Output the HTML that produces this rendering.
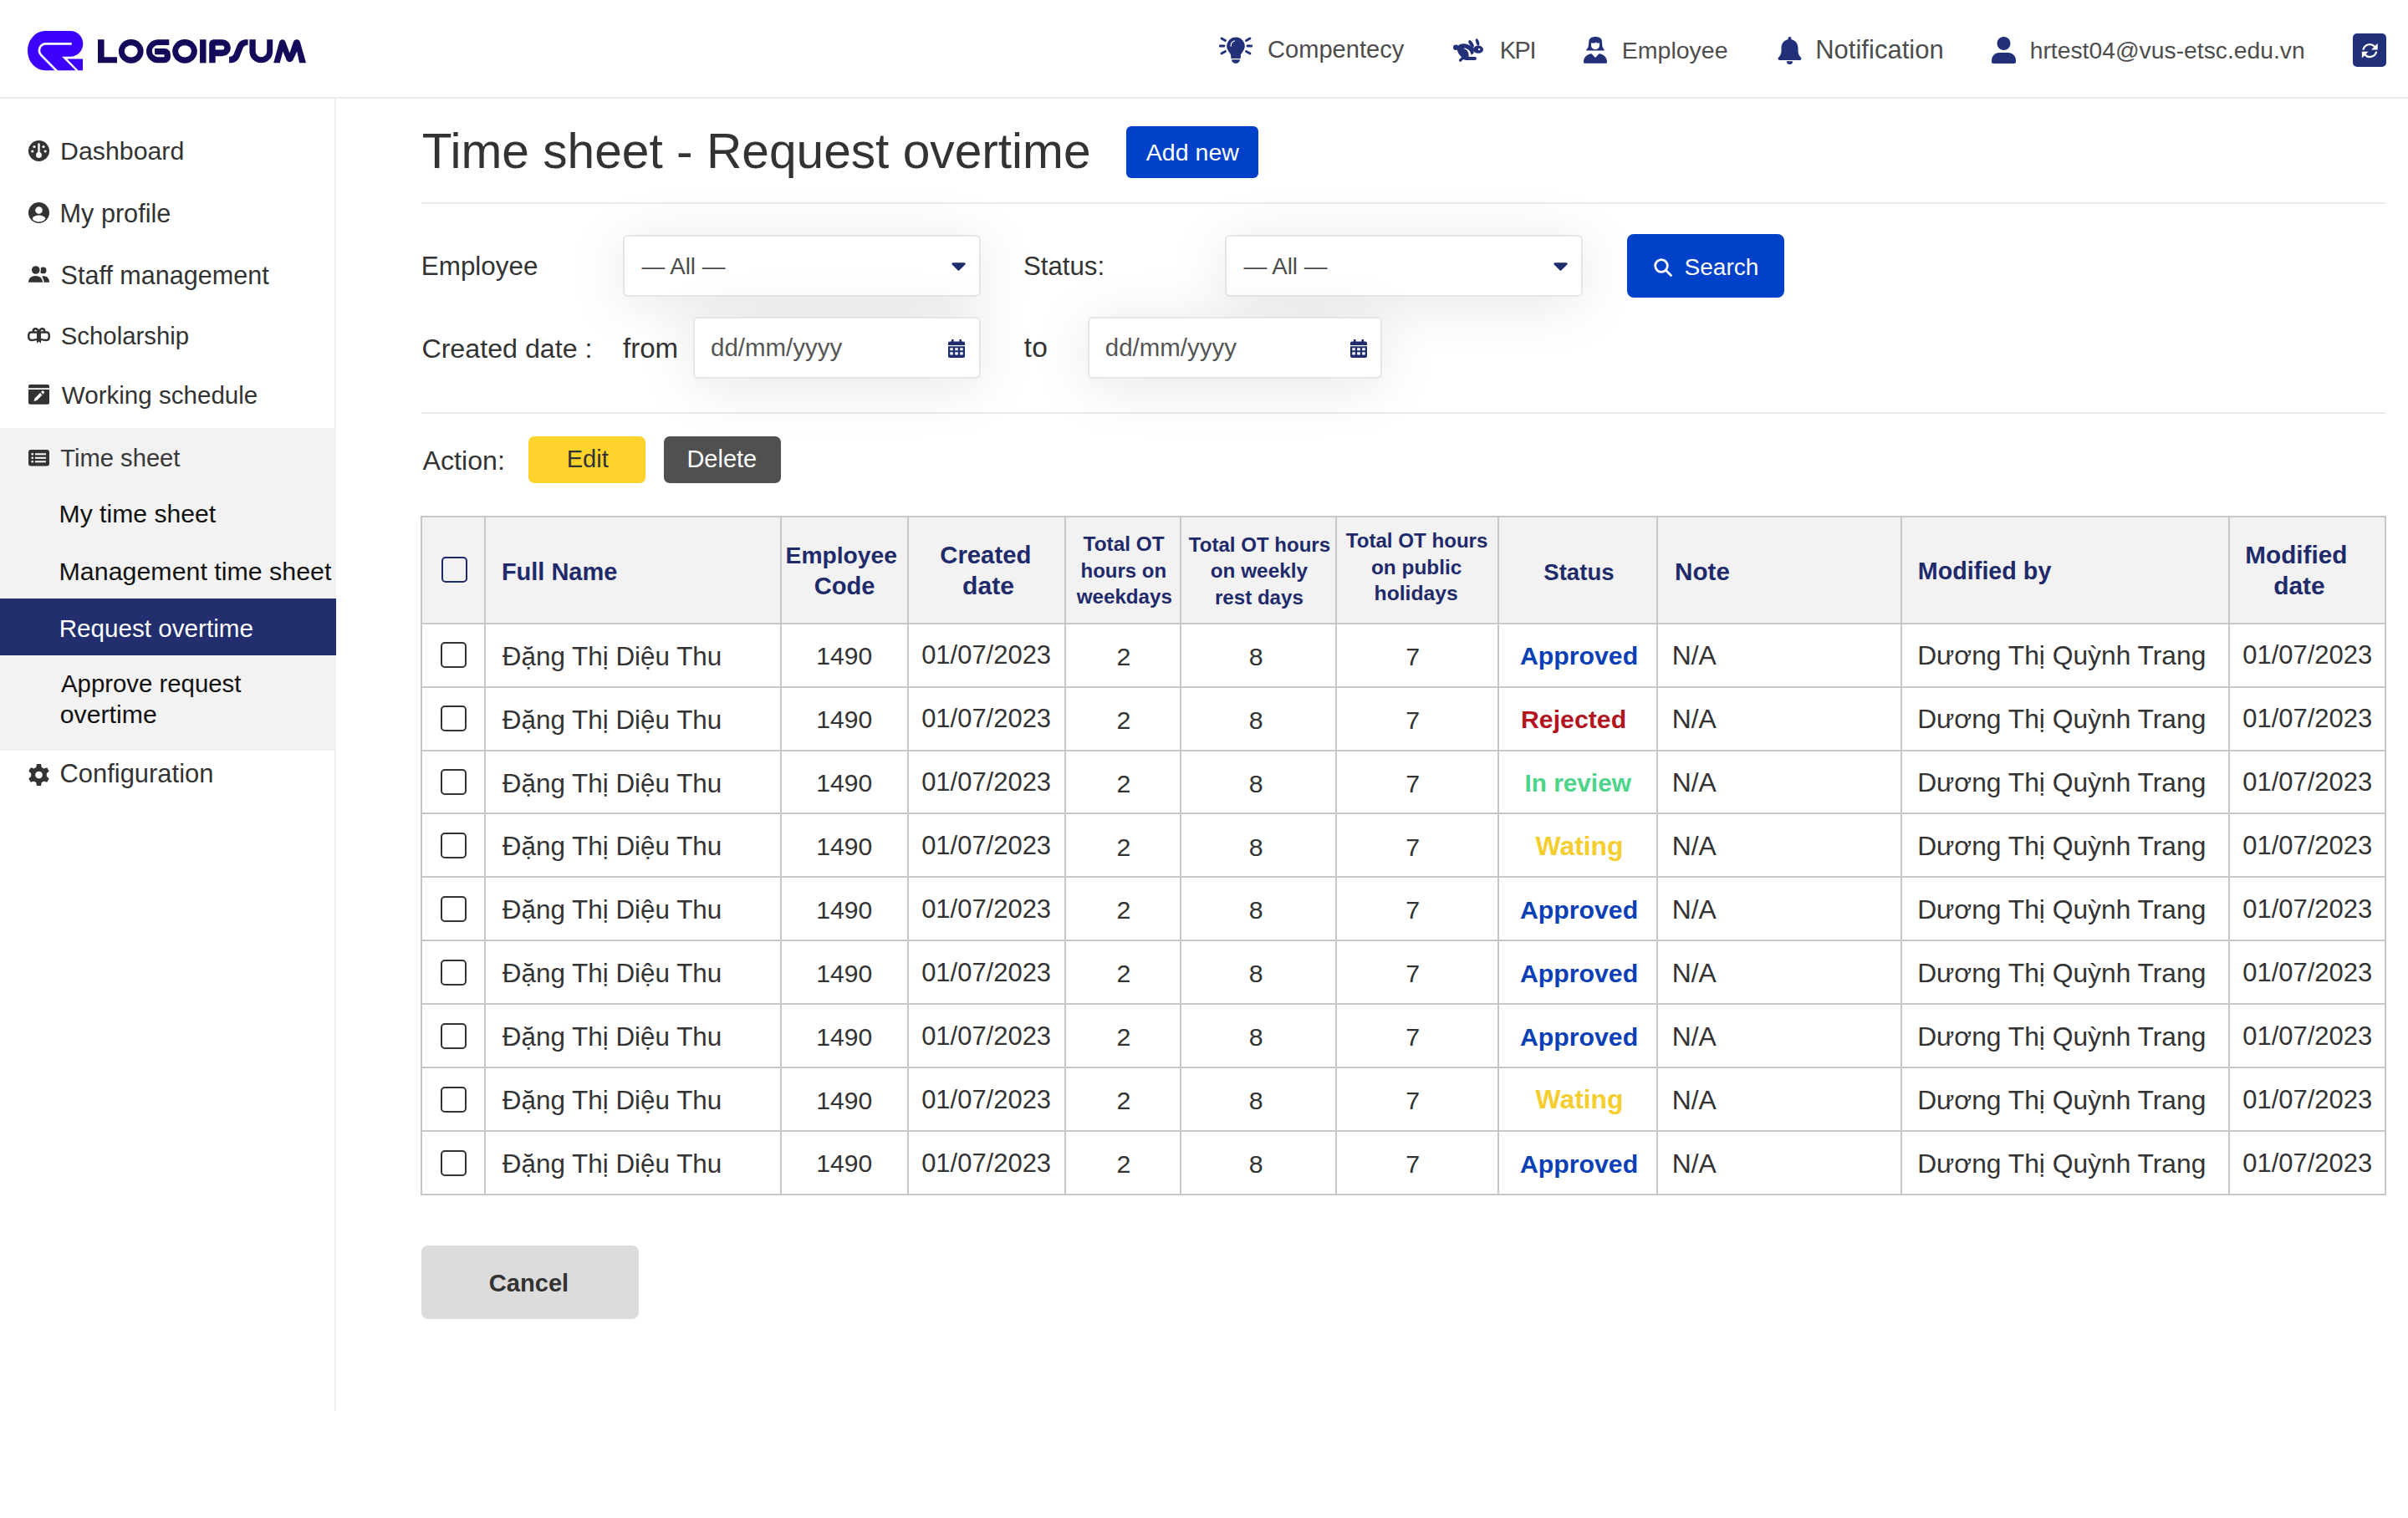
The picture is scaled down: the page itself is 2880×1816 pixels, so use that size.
<!DOCTYPE html>
<html><head><meta charset="utf-8"><title>Time sheet - Request overtime</title>
<style>
html,body{margin:0;padding:0;}
body{width:2880px;height:1816px;position:relative;overflow:hidden;background:#fff;font-family:"Liberation Sans",sans-serif;}
.t{position:absolute;line-height:1;white-space:nowrap;}
.r{position:absolute;}
@media (max-width:1600px){html{zoom:0.5;}}
</style></head><body>
<div class="r" style="left:0px;top:116px;width:2880px;height:2px;background:#ececec;"></div>
<svg class="r" style="left:33px;top:36.6px" width="67" height="48" viewBox="0 0 67 48">
<path d="M21,0 H51 A15.35,15.35 0 0 1 51,30.7 H41 L57.5,47.2 H21 A21,23.6 0 0 1 21,0 Z" fill="#3c00ff"/>
<path d="M47.3,33.4 H66 V47.2 H60.6 Z" fill="#3c00ff"/>
<path d="M51.7,15.4 H22 A8,8 0 0 0 16.34,29.06 L34.5,47.5" fill="none" stroke="#fff" stroke-width="2.6" stroke-linecap="round"/>
</svg>
<svg class="r" style="left:117px;top:46.5px" width="250" height="29" viewBox="0 0 250 29">
<g fill="#140a5a" fill-rule="evenodd">
<path d="M0,0.3 H7.6 V21.2 H23 V28.35 H0 Z"/>
<ellipse cx="39.75" cy="14.35" rx="14.85" ry="14.3"/>
<path d="M85.3,0.3 V7.1 H71.2 A7.2,7.1 0 0 0 71.2,21.2 H79.5 V18.2 H68.1 V10.9 H79.9 A7,7 0 0 1 86.9,17.9 V21.6 A7,6.75 0 0 1 79.9,28.35 H71.45 A14.35,14.05 0 0 1 71.45,0.3 Z"/>
<ellipse cx="104" cy="14.35" rx="14.8" ry="14.3"/>
<rect x="122.05" y="0.3" width="7.45" height="28.05"/>
<path d="M133.2,28.35 V5.5 A5.2,5.2 0 0 1 138.4,0.3 H149 A9.95,9.95 0 0 1 149,20.2 H140.7 V28.35 Z M140.7,7.4 H148.8 A2.5,2.5 0 0 1 148.8,12.4 H140.7 Z"/>
<path d="M157.1,28.35 V20.8 C160.5,20.8 162,19.5 163.5,15.5 L166,9 C168.5,2.5 172,0.3 178,0.3 H179.6 V7.1 C176,7.1 174.3,8.5 173,12 L170.5,18.5 C168,25.5 164.5,28.35 158.5,28.35 Z"/>
<path d="M181.4,0.3 H188.7 V14.45 A6.75,6.75 0 0 0 202.2,14.45 V0.3 H209.2 V14.45 A13.9,13.9 0 0 1 181.4,14.45 Z"/>
<path d="M210.2,28.35 L217,3.5 C217.8,1.2 219,0.3 220.8,0.3 C222.6,0.3 223.8,1.2 224.6,3.5 L229.4,16.5 L233.8,3.5 C234.6,1.2 236,0.3 238,0.3 C240,0.3 241.2,1.2 242,3.5 L249,28.35 H241.1 L238.2,14.4 L233.5,24.5 C232.5,26.3 231.2,27.3 229.5,27.3 C227.8,27.3 226.5,26.3 225.5,24.5 L221.4,14.4 L217.7,28.35 Z"/>
</g>
<g fill="#fff">
<ellipse cx="39.75" cy="14.35" rx="7.85" ry="7.15"/>
<ellipse cx="104" cy="14.35" rx="7.85" ry="7.15"/>
</g>
</svg>
<div class="t" style="left:1516.05px;top:45.27px;font-size:29.09px;color:#4d4d4d;">Compentecy</div>
<div class="t" style="left:1793.70px;top:45.52px;font-size:28.80px;color:#4d4d4d;letter-spacing:-1.34px;">KPI</div>
<div class="t" style="left:1939.72px;top:45.74px;font-size:28.54px;color:#4d4d4d;">Employee</div>
<div class="t" style="left:2171.22px;top:43.74px;font-size:31.02px;color:#4d4d4d;">Notification</div>
<div class="t" style="left:2427.72px;top:46.05px;font-size:28.29px;color:#4d4d4d;">hrtest04@vus-etsc.edu.vn</div>
<svg class="r" style="left:1458px;top:44px" width="40" height="32" viewBox="0 0 40 32">
<g stroke="#22307a" stroke-width="2.8" stroke-linecap="round">
<line x1="3" y1="2" x2="7.5" y2="4.5"/><line x1="1" y1="11" x2="6" y2="11"/><line x1="3" y1="20" x2="7.5" y2="17.5"/>
<line x1="37" y1="2" x2="32.5" y2="4.5"/><line x1="39" y1="11" x2="34" y2="11"/><line x1="37" y1="20" x2="32.5" y2="17.5"/>
</g>
<path d="M20,0.5 A10.8,10.8 0 0 1 30.8,11.3 C30.8,15.5 27.5,18.5 26,21.5 L25.6,26 H14.4 L14,21.5 C12.5,18.5 9.2,15.5 9.2,11.3 A10.8,10.8 0 0 1 20,0.5 Z" fill="#22307a"/>
<path d="M15,27.2 H25 A5,4.8 0 0 1 15,27.2 Z" fill="#22307a"/>
<path d="M14.2,11 A6,6 0 0 1 18.5,5" stroke="#fff" stroke-width="1.3" fill="none" stroke-linecap="round"/>
</svg>
<svg class="r" style="left:1738px;top:46px" width="37" height="29" viewBox="0 0 37 29">
<g fill="#22307a">
<circle cx="3.3" cy="10.8" r="3.3"/>
<ellipse cx="21.6" cy="6.4" rx="2.1" ry="5" transform="rotate(-32 21.6 6.4)"/>
<ellipse cx="29.1" cy="4.4" rx="1.8" ry="4.4" transform="rotate(-18 29.1 4.4)"/>
<ellipse cx="30" cy="13.2" rx="6" ry="4.6"/>
<path d="M5.2,9.6 C7,7.4 9.6,6.3 12.4,6.3 C16,6.3 19.5,7.8 22.5,10 L25,11.8 L24.5,17.6 L22.8,19.3 L21.2,19.5 C20.2,15.5 17.5,12.8 13.6,12.1 C16.8,13.8 18.6,16.8 18.6,20 V22 H26 A1.95,1.95 0 0 1 26,25.9 H15.6 C13.4,25.9 12,25 10.6,23.3 L6.6,18.2 C5,16 4.5,12 5.2,9.6 Z"/>
</g>
<path d="M13.4,11.9 C17.3,12.9 20.2,15.6 21.1,19.4" fill="none" stroke="#fff" stroke-width="1.1"/>
<path d="M17.2,11.2 L24,10.6" fill="none" stroke="#fff" stroke-width="0"/>
<line x1="8.6" y1="26.2" x2="11.4" y2="23.6" stroke="#22307a" stroke-width="3.2" stroke-linecap="round"/>
<rect x="30" y="12" width="2.1" height="2.1" fill="#fff"/>
</svg>
<svg class="r" style="left:1894px;top:44px" width="29" height="32" viewBox="0 0 29 32">
<path d="M6.4,5.5 C6.4,2.2 9.5,0 14.2,0 C18.9,0 22,2.2 22,5.5 L22.4,11 C22.8,13.4 23.8,14.5 24.6,15 A1.1,1.1 0 0 1 24.1,16.6 H3.9 A1.1,1.1 0 0 1 3.4,15 C4.2,14.5 5.4,13.4 5.8,11 Z" fill="#22307a"/>
<path d="M9,7.6 H13.6 L14.7,6.3 L15.7,7.6 H19 C19.1,8.2 19.1,9.5 19.05,10.2 A5.05,5.05 0 0 1 8.95,10.2 C8.9,9.5 8.9,8.2 9,7.6 Z" fill="#fff"/>
<path d="M0,30 C0,24.5 4,20.8 9.5,20.2 L14,25 L18.5,20.2 C24,20.8 28,24.5 28,30 V30.3 A1.5,1.5 0 0 1 26.5,31.8 H1.5 A1.5,1.5 0 0 1 0,30.3 Z" fill="#22307a"/>
</svg>
<svg class="r" style="left:2126px;top:43.6px" width="29" height="33" viewBox="0 0 29 33">
<path d="M14.5,0 A2,2 0 0 1 16.5,2 V3.3 C21.5,4.2 24.5,8.5 24.5,13.5 V17 C24.5,20 26,23 28,25 A1.8,1.8 0 0 1 27,28 H2 A1.8,1.8 0 0 1 1,25 C3,23 4.5,20 4.5,17 V13.5 C4.5,8.5 7.5,4.2 12.5,3.3 V2 A2,2 0 0 1 14.5,0 Z" fill="#22307a"/>
<path d="M10.8,29.3 H18.2 A3.7,3.7 0 0 1 10.8,29.3 Z" fill="#22307a"/>
</svg>
<svg class="r" style="left:2382px;top:44.3px" width="29" height="32" viewBox="0 0 29 32">
<circle cx="14.5" cy="8" r="8" fill="#22307a"/>
<path d="M9.5,19 H19.5 C25,19 29,23 29,28.5 V30 A2,2 0 0 1 27,32 H2 A2,2 0 0 1 0,30 V28.5 C0,23 4,19 9.5,19 Z" fill="#22307a"/>
</svg>
<div class="r" style="left:2814px;top:40px;width:40px;height:40px;background:#22307a;border-radius:5px"></div>
<svg class="r" style="left:2824px;top:50px" width="21" height="21" viewBox="0 0 21 21">
<path d="M2.4,9.6 A8,8 0 0 1 16,5.6" stroke="#fff" stroke-width="2.3" fill="none"/>
<path d="M19.7,1.8 V9.4 H12.1 Z" fill="#fff"/>
<path d="M18.2,11.6 A8,8 0 0 1 4.6,15.6" stroke="#fff" stroke-width="2.3" fill="none"/>
<path d="M0.9,19.4 V11.8 H8.5 Z" fill="#fff"/>
</svg>
<div class="r" style="left:400px;top:118px;width:2px;height:1570px;background:#efefef;"></div>
<div class="r" style="left:0px;top:512px;width:402px;height:386px;background:#f2f2f2;"></div>
<div class="r" style="left:0px;top:716px;width:402px;height:68px;background:#222e6e;"></div>
<div class="t" style="left:72.08px;top:166.35px;font-size:30.31px;color:#333;">Dashboard</div>
<div class="t" style="left:71.55px;top:240.36px;font-size:30.64px;color:#333;">My profile</div>
<div class="t" style="left:72.62px;top:313.73px;font-size:30.56px;color:#333;">Staff management</div>
<div class="t" style="left:72.68px;top:386.73px;font-size:29.38px;color:#333;">Scholarship</div>
<div class="t" style="left:73.85px;top:458.47px;font-size:29.57px;color:#333;">Working schedule</div>
<div class="t" style="left:72.22px;top:533.50px;font-size:29.18px;color:#383838;">Time sheet</div>
<div class="t" style="left:70.59px;top:600.29px;font-size:30.14px;color:#111;">My time sheet</div>
<div class="t" style="left:70.57px;top:668.29px;font-size:30.38px;color:#111;">Management time sheet</div>
<div class="t" style="left:70.63px;top:737.30px;font-size:29.65px;color:#fff;">Request overtime</div>
<div class="t" style="left:73.00px;top:803.14px;font-size:29.37px;color:#111;">Approve request</div>
<div class="t" style="left:71.79px;top:840.20px;font-size:30.24px;color:#111;">overtime</div>
<div class="t" style="left:71.45px;top:911.41px;font-size:30.94px;color:#333;">Configuration</div>
<svg class="r" style="left:34px;top:168px" width="25" height="25" viewBox="0 0 25 25">
<circle cx="12.5" cy="12.5" r="12.5" fill="#333"/>
<g fill="#fff"><circle cx="7" cy="7.5" r="1.6"/><circle cx="18" cy="7.5" r="1.6"/><circle cx="4.8" cy="13" r="1.6"/><circle cx="20.2" cy="13" r="1.6"/>
<rect x="11.3" y="3.5" width="2.4" height="12"/><circle cx="12.5" cy="17.5" r="3.4"/></g>
</svg>
<svg class="r" style="left:34px;top:242px" width="25" height="25" viewBox="0 0 25 25">
<circle cx="12.5" cy="12.5" r="12.5" fill="#333"/>
<circle cx="12.5" cy="9.5" r="4.3" fill="#fff"/>
<path d="M4.5,19.5 C6,16.5 9,15.5 12.5,15.5 C16,15.5 19,16.5 20.5,19.5 A10,10 0 0 1 4.5,19.5 Z" fill="#fff"/>
</svg>
<svg class="r" style="left:34px;top:318px" width="25" height="20" viewBox="0 0 25 20">
<circle cx="17.6" cy="5.4" r="3.9" fill="#333"/>
<path d="M16.3,12.3 H18.5 C22,12.3 25,15 25,19.7 H18 Z" fill="#333"/>
<circle cx="8.75" cy="5" r="6.2" fill="#fff"/>
<path d="M-1.5,19.7 C-1.5,14.5 2.5,10.6 8.5,10.6 C14.5,10.6 18.6,14.5 18.6,19.7 Z" fill="#fff"/>
<circle cx="8.75" cy="5" r="4.8" fill="#333"/>
<path d="M0,19.7 C0,15.2 3.5,12.1 8.5,12.1 C13.5,12.1 17,15.2 17,19.7 Z" fill="#333"/>
</svg>
<svg class="r" style="left:33px;top:392px" width="27" height="19" viewBox="0 0 27 19">
<g fill="none" stroke="#333" stroke-width="2.5">
<path d="M13.5,5.2 C12.5,2.5 11,1.2 9.5,1.2 C7.8,1.2 6.8,2.5 6.8,4 V5.5"/>
<path d="M13.5,5.2 C14.5,2.5 16,1.2 17.5,1.2 C19.2,1.2 20.2,2.5 20.2,4 V5.5"/>
<path d="M4,5.5 H23 C25,5.5 25.8,8 25.8,10.3 C25.8,13.5 24.5,15 22.5,15 C19.5,15 16,13.8 13.5,13.8 C11,13.8 7.5,15 4.5,15 C2.5,15 1.2,13.5 1.2,10.3 C1.2,8 2,5.5 4,5.5 Z"/>
</g>
<path d="M11,4.8 H16 V18.8 L13.5,16.5 L11,18.8 Z" fill="#333"/>
</svg>
<svg class="r" style="left:34px;top:460px" width="25" height="24" viewBox="0 0 25 24">
<path d="M2,0 H23 A2,2 0 0 1 25,2 V4.2 H0 V2 A2,2 0 0 1 2,0 Z" fill="#333"/>
<path d="M0,6 H25 V21.7 A2,2 0 0 1 23,23.7 H2 A2,2 0 0 1 0,21.7 Z" fill="#333"/>
<path d="M14,10 L16.5,12.5 L10,19 L6.5,20 L7.5,16.5 Z M15,9 L16.3,7.8 A1.2,1.2 0 0 1 18,7.8 L18.7,8.5 A1.2,1.2 0 0 1 18.7,10.2 L17.5,11.5 Z" fill="#fff"/>
</svg>
<svg class="r" style="left:34px;top:538px" width="25" height="20" viewBox="0 0 25 20">
<rect x="0" y="0" width="25" height="19.5" rx="3" fill="#333"/>
<g fill="#fff"><circle cx="4.8" cy="5.3" r="1.3"/><circle cx="4.8" cy="9.8" r="1.3"/><circle cx="4.8" cy="14.3" r="1.3"/>
<rect x="8" y="4.3" width="13" height="2"/><rect x="8" y="8.8" width="13" height="2"/><rect x="8" y="13.3" width="13" height="2"/></g>
</svg>
<svg class="r" style="left:34px;top:914px" width="25" height="26" viewBox="0 0 25 26">
<path d="M10,0 H15 L15.8,4 L18.5,5.5 L22.2,4.2 L24.7,8.5 L21.8,11.2 V14.8 L24.7,17.5 L22.2,21.8 L18.5,20.5 L15.8,22 L15,26 H10 L9.2,22 L6.5,20.5 L2.8,21.8 L0.3,17.5 L3.2,14.8 V11.2 L0.3,8.5 L2.8,4.2 L6.5,5.5 L9.2,4 Z M12.5,8.7 A4.3,4.3 0 1 0 12.51,8.7 Z" fill="#333" fill-rule="evenodd"/>
</svg>
<div class="t" style="left:504.83px;top:152.45px;font-size:58.66px;color:#333;">Time sheet - Request overtime</div>
<div class="r" style="left:1347px;top:151px;width:158px;height:62px;background:#0041c9;border-radius:6px"></div>
<div class="t" style="left:1370.80px;top:167.83px;font-size:28.55px;color:#fff;">Add new</div>
<div class="r" style="left:504px;top:242px;width:2349px;height:2px;background:#ebebeb;"></div>
<div class="r" style="left:504px;top:493px;width:2349px;height:2px;background:#ebebeb;"></div>
<div class="r" style="left:745px;top:281px;width:428px;height:74px;background:#fff;border:2px solid #e6e6e6;border-radius:6px;box-shadow:0 8px 70px rgba(0,0,0,0.10);box-sizing:border-box;"></div>
<div class="r" style="left:1465px;top:281px;width:428px;height:74px;background:#fff;border:2px solid #e6e6e6;border-radius:6px;box-shadow:0 8px 70px rgba(0,0,0,0.10);box-sizing:border-box;"></div>
<div class="r" style="left:829px;top:379px;width:344px;height:74px;background:#fff;border:2px solid #e6e6e6;border-radius:6px;box-shadow:0 8px 70px rgba(0,0,0,0.10);box-sizing:border-box;"></div>
<div class="r" style="left:1301px;top:379px;width:352px;height:74px;background:#fff;border:2px solid #e6e6e6;border-radius:6px;box-shadow:0 8px 70px rgba(0,0,0,0.10);box-sizing:border-box;"></div>
<div class="r" style="left:1946px;top:280px;width:188px;height:76px;background:#0041c9;border-radius:8px"></div>
<div class="t" style="left:503.79px;top:303.31px;font-size:31.41px;color:#333;">Employee</div>
<div class="t" style="left:1223.89px;top:303.44px;font-size:31.26px;color:#333;">Status:</div>
<div class="t" style="left:504.39px;top:400.63px;font-size:32.22px;color:#333;">Created date :</div>
<div class="t" style="left:745.00px;top:399.90px;font-size:33.07px;color:#333;">from</div>
<div class="t" style="left:1224.80px;top:399.07px;font-size:33.59px;color:#333;">to</div>
<div class="t" style="left:767.40px;top:304.75px;font-size:27.70px;color:#4a4a4a;">— All —</div>
<div class="t" style="left:1487.40px;top:304.75px;font-size:27.70px;color:#4a4a4a;">— All —</div>
<div class="t" style="left:850.12px;top:401.26px;font-size:29.46px;color:#555;">dd/mm/yyyy</div>
<div class="t" style="left:1321.82px;top:401.26px;font-size:29.46px;color:#555;">dd/mm/yyyy</div>
<div class="t" style="left:2014.44px;top:305.83px;font-size:28.09px;color:#fff;">Search</div>
<svg class="r" style="left:1978px;top:308.5px" width="23" height="23" viewBox="0 0 23 23">
<circle cx="9" cy="9" r="7.3" fill="none" stroke="#fff" stroke-width="2.8"/>
<line x1="14.3" y1="14.3" x2="20.5" y2="20.5" stroke="#fff" stroke-width="2.8" stroke-linecap="round"/>
</svg>
<svg class="r" style="left:1138px;top:314px" width="17" height="11" viewBox="0 0 17 11"><path d="M1.6,0.3 H15.4 A1.3,1.3 0 0 1 16.3,2.5 L9.3,9.4 A1.3,1.3 0 0 1 7.7,9.4 L0.7,2.5 A1.3,1.3 0 0 1 1.6,0.3 Z" fill="#1f2c6e"/></svg>
<svg class="r" style="left:1858px;top:314px" width="17" height="11" viewBox="0 0 17 11"><path d="M1.6,0.3 H15.4 A1.3,1.3 0 0 1 16.3,2.5 L9.3,9.4 A1.3,1.3 0 0 1 7.7,9.4 L0.7,2.5 A1.3,1.3 0 0 1 1.6,0.3 Z" fill="#1f2c6e"/></svg>
<svg class="r" style="left:1134px;top:406px" width="20" height="22" viewBox="0 0 20 22">
<path d="M4,0 H6.5 V2.5 H13.5 V0 H16 V2.5 H18 A2,2 0 0 1 20,4.5 V7 H0 V4.5 A2,2 0 0 1 2,2.5 H4 Z" fill="#1f2c6e"/>
<path d="M0,8.3 H20 V20 A2,2 0 0 1 18,22 H2 A2,2 0 0 1 0,20 Z M2.3,10.3 V13.3 H5.8 V10.3 Z M8.2,10.3 V13.3 H11.8 V10.3 Z M14.2,10.3 V13.3 H17.7 V10.3 Z M2.3,15.3 V18.5 H5.8 V15.3 Z M8.2,15.3 V18.5 H11.8 V15.3 Z M14.2,15.3 V18.5 H17.7 V15.3 Z" fill="#1f2c6e" fill-rule="evenodd"/>
</svg>
<svg class="r" style="left:1615px;top:406px" width="20" height="22" viewBox="0 0 20 22">
<path d="M4,0 H6.5 V2.5 H13.5 V0 H16 V2.5 H18 A2,2 0 0 1 20,4.5 V7 H0 V4.5 A2,2 0 0 1 2,2.5 H4 Z" fill="#1f2c6e"/>
<path d="M0,8.3 H20 V20 A2,2 0 0 1 18,22 H2 A2,2 0 0 1 0,20 Z M2.3,10.3 V13.3 H5.8 V10.3 Z M8.2,10.3 V13.3 H11.8 V10.3 Z M14.2,10.3 V13.3 H17.7 V10.3 Z M2.3,15.3 V18.5 H5.8 V15.3 Z M8.2,15.3 V18.5 H11.8 V15.3 Z M14.2,15.3 V18.5 H17.7 V15.3 Z" fill="#1f2c6e" fill-rule="evenodd"/>
</svg>
<div class="t" style="left:505.50px;top:534.86px;font-size:32.18px;color:#333;">Action:</div>
<div class="r" style="left:632px;top:522px;width:140px;height:56px;background:#fdd32b;border-radius:7px"></div>
<div class="r" style="left:794px;top:522px;width:140px;height:56px;background:#505050;border-radius:7px"></div>
<div class="t" style="left:677.68px;top:535.21px;font-size:29.05px;color:#333;">Edit</div>
<div class="t" style="left:821.49px;top:535.31px;font-size:28.93px;color:#fff;">Delete</div>
<div class="r" style="left:504px;top:618px;width:2349px;height:127.70000000000005px;background:#f2f2f2;"></div>
<div class="r" style="left:503px;top:617px;width:2351px;height:2px;background:#c8c8c8;"></div>
<div class="r" style="left:503px;top:745px;width:2351px;height:2px;background:#c8c8c8;"></div>
<div class="r" style="left:503px;top:821px;width:2351px;height:2px;background:#c8c8c8;"></div>
<div class="r" style="left:503px;top:897px;width:2351px;height:2px;background:#c8c8c8;"></div>
<div class="r" style="left:503px;top:972px;width:2351px;height:2px;background:#c8c8c8;"></div>
<div class="r" style="left:503px;top:1048px;width:2351px;height:2px;background:#c8c8c8;"></div>
<div class="r" style="left:503px;top:1124px;width:2351px;height:2px;background:#c8c8c8;"></div>
<div class="r" style="left:503px;top:1200px;width:2351px;height:2px;background:#c8c8c8;"></div>
<div class="r" style="left:503px;top:1276px;width:2351px;height:2px;background:#c8c8c8;"></div>
<div class="r" style="left:503px;top:1352px;width:2351px;height:2px;background:#c8c8c8;"></div>
<div class="r" style="left:503px;top:1428px;width:2351px;height:2px;background:#c8c8c8;"></div>
<div class="r" style="left:503px;top:617px;width:2px;height:813px;background:#c8c8c8;"></div>
<div class="r" style="left:579px;top:617px;width:2px;height:813px;background:#c8c8c8;"></div>
<div class="r" style="left:933px;top:617px;width:2px;height:813px;background:#c8c8c8;"></div>
<div class="r" style="left:1085px;top:617px;width:2px;height:813px;background:#c8c8c8;"></div>
<div class="r" style="left:1273px;top:617px;width:2px;height:813px;background:#c8c8c8;"></div>
<div class="r" style="left:1411px;top:617px;width:2px;height:813px;background:#c8c8c8;"></div>
<div class="r" style="left:1597px;top:617px;width:2px;height:813px;background:#c8c8c8;"></div>
<div class="r" style="left:1791px;top:617px;width:2px;height:813px;background:#c8c8c8;"></div>
<div class="r" style="left:1981px;top:617px;width:2px;height:813px;background:#c8c8c8;"></div>
<div class="r" style="left:2273px;top:617px;width:2px;height:813px;background:#c8c8c8;"></div>
<div class="r" style="left:2665px;top:617px;width:2px;height:813px;background:#c8c8c8;"></div>
<div class="r" style="left:2852px;top:617px;width:2px;height:813px;background:#c8c8c8;"></div>
<div class="r" style="left:528px;top:666px;width:31px;height:31px;border:2.5px solid #1f2a6b;border-radius:5px;box-sizing:border-box"></div>
<div class="t" style="left:599.92px;top:669.77px;font-size:28.97px;color:#1f2a6b;font-weight:700;">Full Name</div>
<div class="t" style="left:939.56px;top:649.98px;font-size:28.26px;color:#1f2a6b;font-weight:700;">Employee</div>
<div class="t" style="left:973.73px;top:687.02px;font-size:29.15px;color:#1f2a6b;font-weight:700;">Code</div>
<div class="t" style="left:1124.23px;top:649.07px;font-size:29.34px;color:#1f2a6b;font-weight:700;">Created</div>
<div class="t" style="left:1151.09px;top:686.18px;font-size:30.15px;color:#1f2a6b;font-weight:700;">date</div>
<div class="t" style="left:1295.56px;top:639.23px;font-size:24.42px;color:#1f2a6b;font-weight:700;">Total OT</div>
<div class="t" style="left:1292.52px;top:671.48px;font-size:24.00px;color:#1f2a6b;font-weight:700;">hours on</div>
<div class="t" style="left:1287.72px;top:702.23px;font-size:24.18px;color:#1f2a6b;font-weight:700;">weekdays</div>
<div class="t" style="left:1421.86px;top:639.64px;font-size:24.05px;color:#1f2a6b;font-weight:700;">Total OT hours</div>
<div class="t" style="left:1447.73px;top:670.91px;font-size:24.33px;color:#1f2a6b;font-weight:700;">on weekly</div>
<div class="t" style="left:1452.93px;top:702.67px;font-size:24.13px;color:#1f2a6b;font-weight:700;">rest days</div>
<div class="t" style="left:1609.76px;top:635.48px;font-size:24.12px;color:#1f2a6b;font-weight:700;">Total OT hours</div>
<div class="t" style="left:1639.92px;top:666.84px;font-size:24.41px;color:#1f2a6b;font-weight:700;">on public</div>
<div class="t" style="left:1643.57px;top:698.18px;font-size:24.71px;color:#1f2a6b;font-weight:700;">holidays</div>
<div class="t" style="left:1846.27px;top:670.63px;font-size:27.60px;color:#1f2a6b;font-weight:700;">Status</div>
<div class="t" style="left:2002.97px;top:668.88px;font-size:29.67px;color:#1f2a6b;font-weight:700;">Note</div>
<div class="t" style="left:2293.83px;top:668.88px;font-size:28.73px;color:#1f2a6b;font-weight:700;">Modified by</div>
<div class="t" style="left:2685.37px;top:648.98px;font-size:29.67px;color:#1f2a6b;font-weight:700;">Modified</div>
<div class="t" style="left:2719.20px;top:686.25px;font-size:29.95px;color:#1f2a6b;font-weight:700;">date</div>
<div class="r" style="left:526.5px;top:768.2px;width:31px;height:31px;border:2.5px solid #333;border-radius:5px;box-sizing:border-box"></div>
<div class="t" style="left:600.84px;top:769.70px;font-size:31.42px;color:#333;">Đặng Thị Diệu Thu</div>
<div class="t" style="left:976.24px;top:770.00px;font-size:30.12px;color:#333;">1490</div>
<div class="t" style="left:1102.16px;top:769.29px;font-size:30.96px;color:#333;">01/07/2023</div>
<div class="t" style="left:1335.58px;top:769.77px;font-size:30.40px;color:#333;">2</div>
<div class="t" style="left:1493.63px;top:769.77px;font-size:30.40px;color:#333;">8</div>
<div class="t" style="left:1681.18px;top:769.77px;font-size:30.40px;color:#333;">7</div>
<div class="t" style="left:1817.94px;top:770.17px;font-size:30.27px;color:#0b3fb8;font-weight:700;">Approved</div>
<div class="t" style="left:1999.65px;top:769.33px;font-size:31.86px;color:#333;">N/A</div>
<div class="t" style="left:2293.16px;top:769.40px;font-size:31.77px;color:#333;">Dương Thị Quỳnh Trang</div>
<div class="t" style="left:2682.36px;top:769.31px;font-size:30.94px;color:#333;">01/07/2023</div>
<div class="r" style="left:526.5px;top:844.1px;width:31px;height:31px;border:2.5px solid #333;border-radius:5px;box-sizing:border-box"></div>
<div class="t" style="left:600.84px;top:845.63px;font-size:31.42px;color:#333;">Đặng Thị Diệu Thu</div>
<div class="t" style="left:976.24px;top:845.93px;font-size:30.12px;color:#333;">1490</div>
<div class="t" style="left:1102.16px;top:845.22px;font-size:30.96px;color:#333;">01/07/2023</div>
<div class="t" style="left:1335.58px;top:845.70px;font-size:30.40px;color:#333;">2</div>
<div class="t" style="left:1493.63px;top:845.70px;font-size:30.40px;color:#333;">8</div>
<div class="t" style="left:1681.18px;top:845.70px;font-size:30.40px;color:#333;">7</div>
<div class="t" style="left:1819.03px;top:846.13px;font-size:30.25px;color:#b3141e;font-weight:700;">Rejected</div>
<div class="t" style="left:1999.65px;top:845.26px;font-size:31.86px;color:#333;">N/A</div>
<div class="t" style="left:2293.16px;top:845.33px;font-size:31.77px;color:#333;">Dương Thị Quỳnh Trang</div>
<div class="t" style="left:2682.36px;top:845.24px;font-size:30.94px;color:#333;">01/07/2023</div>
<div class="r" style="left:526.5px;top:920.1px;width:31px;height:31px;border:2.5px solid #333;border-radius:5px;box-sizing:border-box"></div>
<div class="t" style="left:600.84px;top:921.56px;font-size:31.42px;color:#333;">Đặng Thị Diệu Thu</div>
<div class="t" style="left:976.24px;top:921.86px;font-size:30.12px;color:#333;">1490</div>
<div class="t" style="left:1102.16px;top:921.15px;font-size:30.96px;color:#333;">01/07/2023</div>
<div class="t" style="left:1335.58px;top:921.63px;font-size:30.40px;color:#333;">2</div>
<div class="t" style="left:1493.63px;top:921.63px;font-size:30.40px;color:#333;">8</div>
<div class="t" style="left:1681.18px;top:921.63px;font-size:30.40px;color:#333;">7</div>
<div class="t" style="left:1823.46px;top:922.46px;font-size:29.77px;color:#4cd48a;font-weight:700;">In review</div>
<div class="t" style="left:1999.65px;top:921.19px;font-size:31.86px;color:#333;">N/A</div>
<div class="t" style="left:2293.16px;top:921.26px;font-size:31.77px;color:#333;">Dương Thị Quỳnh Trang</div>
<div class="t" style="left:2682.36px;top:921.17px;font-size:30.94px;color:#333;">01/07/2023</div>
<div class="r" style="left:526.5px;top:996.0px;width:31px;height:31px;border:2.5px solid #333;border-radius:5px;box-sizing:border-box"></div>
<div class="t" style="left:600.84px;top:997.49px;font-size:31.42px;color:#333;">Đặng Thị Diệu Thu</div>
<div class="t" style="left:976.24px;top:997.79px;font-size:30.12px;color:#333;">1490</div>
<div class="t" style="left:1102.16px;top:997.08px;font-size:30.96px;color:#333;">01/07/2023</div>
<div class="t" style="left:1335.58px;top:997.56px;font-size:30.40px;color:#333;">2</div>
<div class="t" style="left:1493.63px;top:997.56px;font-size:30.40px;color:#333;">8</div>
<div class="t" style="left:1681.18px;top:997.56px;font-size:30.40px;color:#333;">7</div>
<div class="t" style="left:1836.50px;top:996.60px;font-size:31.89px;color:#f5cd2e;font-weight:700;">Wating</div>
<div class="t" style="left:1999.65px;top:997.12px;font-size:31.86px;color:#333;">N/A</div>
<div class="t" style="left:2293.16px;top:997.19px;font-size:31.77px;color:#333;">Dương Thị Quỳnh Trang</div>
<div class="t" style="left:2682.36px;top:997.10px;font-size:30.94px;color:#333;">01/07/2023</div>
<div class="r" style="left:526.5px;top:1071.9px;width:31px;height:31px;border:2.5px solid #333;border-radius:5px;box-sizing:border-box"></div>
<div class="t" style="left:600.84px;top:1073.42px;font-size:31.42px;color:#333;">Đặng Thị Diệu Thu</div>
<div class="t" style="left:976.24px;top:1073.72px;font-size:30.12px;color:#333;">1490</div>
<div class="t" style="left:1102.16px;top:1073.01px;font-size:30.96px;color:#333;">01/07/2023</div>
<div class="t" style="left:1335.58px;top:1073.49px;font-size:30.40px;color:#333;">2</div>
<div class="t" style="left:1493.63px;top:1073.49px;font-size:30.40px;color:#333;">8</div>
<div class="t" style="left:1681.18px;top:1073.49px;font-size:30.40px;color:#333;">7</div>
<div class="t" style="left:1817.94px;top:1073.89px;font-size:30.27px;color:#0b3fb8;font-weight:700;">Approved</div>
<div class="t" style="left:1999.65px;top:1073.05px;font-size:31.86px;color:#333;">N/A</div>
<div class="t" style="left:2293.16px;top:1073.12px;font-size:31.77px;color:#333;">Dương Thị Quỳnh Trang</div>
<div class="t" style="left:2682.36px;top:1073.03px;font-size:30.94px;color:#333;">01/07/2023</div>
<div class="r" style="left:526.5px;top:1147.9px;width:31px;height:31px;border:2.5px solid #333;border-radius:5px;box-sizing:border-box"></div>
<div class="t" style="left:600.84px;top:1149.35px;font-size:31.42px;color:#333;">Đặng Thị Diệu Thu</div>
<div class="t" style="left:976.24px;top:1149.65px;font-size:30.12px;color:#333;">1490</div>
<div class="t" style="left:1102.16px;top:1148.94px;font-size:30.96px;color:#333;">01/07/2023</div>
<div class="t" style="left:1335.58px;top:1149.42px;font-size:30.40px;color:#333;">2</div>
<div class="t" style="left:1493.63px;top:1149.42px;font-size:30.40px;color:#333;">8</div>
<div class="t" style="left:1681.18px;top:1149.42px;font-size:30.40px;color:#333;">7</div>
<div class="t" style="left:1817.94px;top:1149.82px;font-size:30.27px;color:#0b3fb8;font-weight:700;">Approved</div>
<div class="t" style="left:1999.65px;top:1148.98px;font-size:31.86px;color:#333;">N/A</div>
<div class="t" style="left:2293.16px;top:1149.05px;font-size:31.77px;color:#333;">Dương Thị Quỳnh Trang</div>
<div class="t" style="left:2682.36px;top:1148.96px;font-size:30.94px;color:#333;">01/07/2023</div>
<div class="r" style="left:526.5px;top:1223.8px;width:31px;height:31px;border:2.5px solid #333;border-radius:5px;box-sizing:border-box"></div>
<div class="t" style="left:600.84px;top:1225.28px;font-size:31.42px;color:#333;">Đặng Thị Diệu Thu</div>
<div class="t" style="left:976.24px;top:1225.58px;font-size:30.12px;color:#333;">1490</div>
<div class="t" style="left:1102.16px;top:1224.87px;font-size:30.96px;color:#333;">01/07/2023</div>
<div class="t" style="left:1335.58px;top:1225.35px;font-size:30.40px;color:#333;">2</div>
<div class="t" style="left:1493.63px;top:1225.35px;font-size:30.40px;color:#333;">8</div>
<div class="t" style="left:1681.18px;top:1225.35px;font-size:30.40px;color:#333;">7</div>
<div class="t" style="left:1817.94px;top:1225.75px;font-size:30.27px;color:#0b3fb8;font-weight:700;">Approved</div>
<div class="t" style="left:1999.65px;top:1224.91px;font-size:31.86px;color:#333;">N/A</div>
<div class="t" style="left:2293.16px;top:1224.98px;font-size:31.77px;color:#333;">Dương Thị Quỳnh Trang</div>
<div class="t" style="left:2682.36px;top:1224.89px;font-size:30.94px;color:#333;">01/07/2023</div>
<div class="r" style="left:526.5px;top:1299.7px;width:31px;height:31px;border:2.5px solid #333;border-radius:5px;box-sizing:border-box"></div>
<div class="t" style="left:600.84px;top:1301.21px;font-size:31.42px;color:#333;">Đặng Thị Diệu Thu</div>
<div class="t" style="left:976.24px;top:1301.51px;font-size:30.12px;color:#333;">1490</div>
<div class="t" style="left:1102.16px;top:1300.80px;font-size:30.96px;color:#333;">01/07/2023</div>
<div class="t" style="left:1335.58px;top:1301.28px;font-size:30.40px;color:#333;">2</div>
<div class="t" style="left:1493.63px;top:1301.28px;font-size:30.40px;color:#333;">8</div>
<div class="t" style="left:1681.18px;top:1301.28px;font-size:30.40px;color:#333;">7</div>
<div class="t" style="left:1836.50px;top:1300.32px;font-size:31.89px;color:#f5cd2e;font-weight:700;">Wating</div>
<div class="t" style="left:1999.65px;top:1300.84px;font-size:31.86px;color:#333;">N/A</div>
<div class="t" style="left:2293.16px;top:1300.91px;font-size:31.77px;color:#333;">Dương Thị Quỳnh Trang</div>
<div class="t" style="left:2682.36px;top:1300.82px;font-size:30.94px;color:#333;">01/07/2023</div>
<div class="r" style="left:526.5px;top:1375.6px;width:31px;height:31px;border:2.5px solid #333;border-radius:5px;box-sizing:border-box"></div>
<div class="t" style="left:600.84px;top:1377.14px;font-size:31.42px;color:#333;">Đặng Thị Diệu Thu</div>
<div class="t" style="left:976.24px;top:1377.44px;font-size:30.12px;color:#333;">1490</div>
<div class="t" style="left:1102.16px;top:1376.73px;font-size:30.96px;color:#333;">01/07/2023</div>
<div class="t" style="left:1335.58px;top:1377.21px;font-size:30.40px;color:#333;">2</div>
<div class="t" style="left:1493.63px;top:1377.21px;font-size:30.40px;color:#333;">8</div>
<div class="t" style="left:1681.18px;top:1377.21px;font-size:30.40px;color:#333;">7</div>
<div class="t" style="left:1817.94px;top:1377.61px;font-size:30.27px;color:#0b3fb8;font-weight:700;">Approved</div>
<div class="t" style="left:1999.65px;top:1376.77px;font-size:31.86px;color:#333;">N/A</div>
<div class="t" style="left:2293.16px;top:1376.84px;font-size:31.77px;color:#333;">Dương Thị Quỳnh Trang</div>
<div class="t" style="left:2682.36px;top:1376.75px;font-size:30.94px;color:#333;">01/07/2023</div>
<div class="r" style="left:504px;top:1490px;width:260px;height:88px;background:#dcdcdc;border-radius:8px"></div>
<div class="t" style="left:584.63px;top:1521.33px;font-size:29.15px;color:#333;font-weight:700;">Cancel</div>
</body></html>
